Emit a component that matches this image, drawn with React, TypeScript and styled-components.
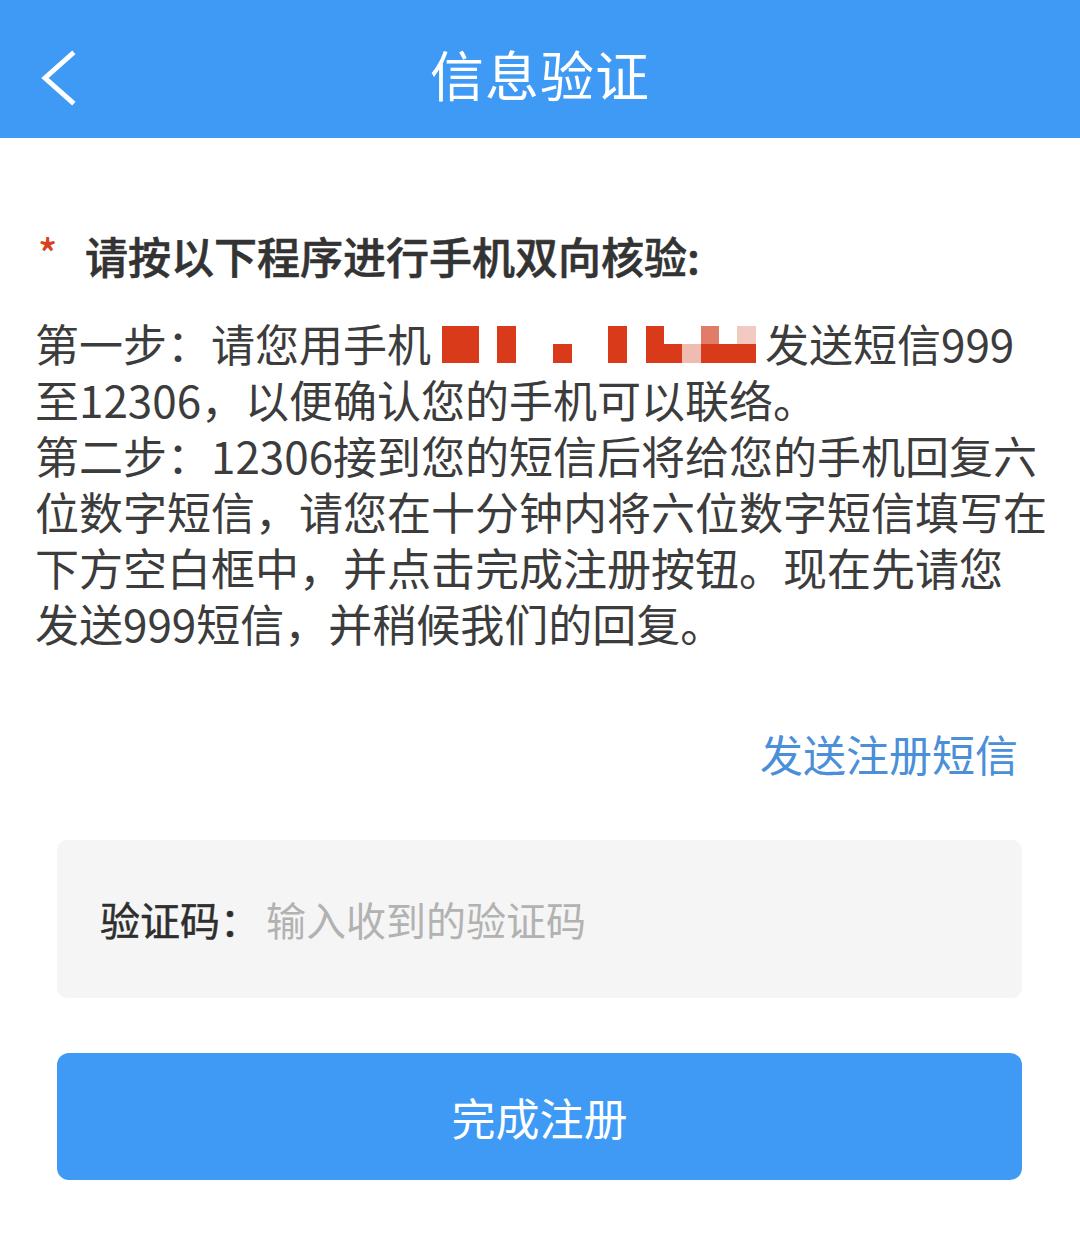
import React from "react"
import styled, { createGlobalStyle } from "styled-components"

const GlobalStyle = createGlobalStyle`
  html, body {
    margin: 0;
    padding: 0;
    background: #ffffff;
    font-family: "Noto Sans CJK SC", "Noto Sans", sans-serif;
  }
`

const BLUE = "#3e9af5"

const Page = styled.div`
  width: 1080px;
  min-height: 1233px;
  background: #fff;
  display: flex;
  flex-direction: column;
`

const Header = styled.header`
  height: 138px;
  background: ${BLUE};
  display: flex;
  align-items: center;
  justify-content: center;
  position: relative;
`

const BackButton = styled.div`
  position: absolute;
  left: 38px;
  top: 50px;
  width: 40px;
  height: 56px;
`

const Title = styled.h1`
  margin: 0;
  color: #fff;
  font-size: 54px;
  font-weight: 400;
  letter-spacing: 1px;
  line-height: 1;
  margin-top: 10px;
`

const Content = styled.main`
  padding: 89px 0 0 35px;
  display: flex;
  flex-direction: column;
`

const Heading = styled.div`
  display: flex;
  align-items: center;
  height: 56px;
  font-size: 43px;
  font-weight: 500;
  color: #333;
  white-space: nowrap;
  -webkit-text-stroke: 0.6px #333;
`

const Star = styled.span`
  color: #d9401e;
  font-size: 40px;
  font-weight: 500;
  width: 47px;
  padding-left: 3px;
  margin-top: -6px;
  -webkit-text-stroke: 0;
`

const Body = styled.div`
  margin-top: 32px;
  font-size: 44px;
  line-height: 56px;
  color: #3c3c3c;
`

const Line = styled.div`
  white-space: nowrap;
  display: flex;
  align-items: center;
  height: 56px;
`

const Redacted = styled.svg`
  flex: none;
  margin-left: 11px;
  margin-right: 6px;
  margin-top: 2px;
`

const LinkRow = styled.div`
  margin-top: 74px;
  padding-right: 62px;
  display: flex;
  justify-content: flex-end;
  font-size: 43px;
  line-height: 56px;
  color: #4a8fd8;
`

const Form = styled.div`
  padding: 0 58px 0 57px;
  display: flex;
  flex-direction: column;
  margin-left: -35px;
`

const InputBox = styled.label`
  margin-top: 59px;
  height: 158px;
  background: #f5f5f5;
  border-radius: 10px;
  display: flex;
  align-items: center;
  padding-left: 43px;
  box-sizing: border-box;
`

const FieldLabel = styled.span`
  font-size: 40px;
  font-weight: 400;
  color: #2e2e2e;
  width: 166px;
  flex: none;
  -webkit-text-stroke: 0.5px #2e2e2e;
`

const Input = styled.input`
  border: none;
  background: transparent;
  outline: none;
  flex: 1;
  font-family: inherit;
  font-size: 40px;
  color: #333;
  padding: 0;
  &::placeholder {
    color: #b2b2b2;
  }
`

const SubmitButton = styled.button`
  margin-top: 55px;
  height: 127px;
  border: none;
  border-radius: 12px;
  background: ${BLUE};
  color: #fff;
  font-family: inherit;
  font-size: 44px;
  font-weight: 400;
  cursor: pointer;
`

const RED = "#d93a1a"

const PhoneMask = () => (
  <Redacted width="317" height="37" viewBox="0 0 317 37">
    <rect x="0" y="0" width="37" height="37" fill={RED} />
    <rect x="55" y="0" width="19" height="37" fill={RED} />
    <rect x="111" y="18" width="19" height="19" fill={RED} />
    <rect x="166" y="0" width="19" height="37" fill={RED} />
    <rect x="204" y="0" width="18" height="37" fill={RED} />
    <rect x="204" y="18" width="36" height="19" fill={RED} />
    <rect x="240" y="18" width="19" height="19" fill="#efbcb2" />
    <rect x="259" y="0" width="18" height="18" fill="#e07c68" />
    <rect x="259" y="18" width="55" height="19" fill={RED} />
    <rect x="295" y="0" width="19" height="18" fill="#f2cac2" />
  </Redacted>
)

export default function App() {
  return (
    <Page>
      <GlobalStyle />
      <Header>
        <BackButton>
          <svg width="40" height="56" viewBox="0 0 40 56">
            <polyline points="34,4 7,28 34,52" fill="none" stroke="#fff" strokeWidth="5" strokeLinecap="square" />
          </svg>
        </BackButton>
        <Title>信息验证</Title>
      </Header>
      <Content>
        <Heading>
          <Star>*</Star>
          请按以下程序进行手机双向核验:
        </Heading>
        <Body>
          <Line>
            第一步：请您用手机
            <PhoneMask />
            发送短信999
          </Line>
          <Line>至12306，以便确认您的手机可以联络。</Line>
          <Line>第二步：12306接到您的短信后将给您的手机回复六</Line>
          <Line>位数字短信，请您在十分钟内将六位数字短信填写在</Line>
          <Line>下方空白框中，并点击完成注册按钮。现在先请您</Line>
          <Line>发送999短信，并稍候我们的回复。</Line>
        </Body>
        <LinkRow>发送注册短信</LinkRow>
        <Form>
          <InputBox>
            <FieldLabel>验证码：</FieldLabel>
            <Input placeholder="输入收到的验证码" />
          </InputBox>
          <SubmitButton>完成注册</SubmitButton>
        </Form>
      </Content>
    </Page>
  )
}
